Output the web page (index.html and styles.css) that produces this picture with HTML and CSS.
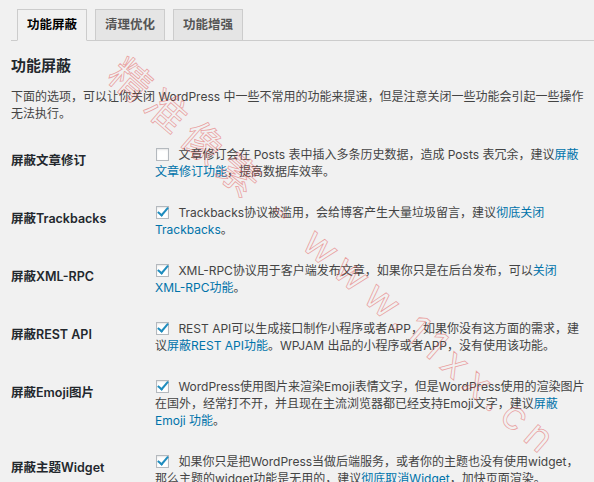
FILE: index.html
```html
<!DOCTYPE html>
<html>

<head>
    <meta name="viewport" content="width=device-width, initial-scale=1" />
    <link rel="stylesheet" href="styles.css">
</head>

<body>
    <div class="wrap">
        <nav class="nav-tabs">
            <a class="nav-tab active" href="#">功能屏蔽</a>
            <a class="nav-tab" href="#">清理优化</a>
            <a class="nav-tab" href="#">功能增强</a>
        </nav>

        <h2 class="title">功能屏蔽</h2>
        <p class="desc">下面的选项，可以让你关闭 WordPress 中一些不常用的功能来提速，但是注意关闭一些功能会引起一些操作无法执行。</p>

        <div class="form-table">
            <div class="row">
                <div class="th">屏蔽文章修订</div>
                <div class="td"><label><input type="checkbox"> 文章修订会在 Posts 表中插入多条历史数据，造成 Posts 表冗余，建议<a href="#">屏蔽文章修订功能</a>，提高数据库效率。</label></div>
            </div>
            <div class="row">
                <div class="th">屏蔽Trackbacks</div>
                <div class="td"><label><input type="checkbox" checked> Trackbacks协议被滥用，会给博客产生大量垃圾留言，建议<a href="#">彻底关闭Trackbacks</a>。</label></div>
            </div>
            <div class="row">
                <div class="th">屏蔽XML-RPC</div>
                <div class="td"><label><input type="checkbox" checked> XML-RPC协议用于客户端发布文章，如果你只是在后台发布，可以<a href="#">关闭<span class="nw">XML-RPC</span>功能</a>。</label></div>
            </div>
            <div class="row">
                <div class="th">屏蔽REST API</div>
                <div class="td"><label><input type="checkbox" checked> REST API可以生成接口制作小程序或者APP，如果你没有这方面的需求，建议<a href="#">屏蔽REST API功能</a>。WPJAM 出品的小程序或者APP，没有使用该功能。</label></div>
            </div>
            <div class="row">
                <div class="th">屏蔽Emoji图片</div>
                <div class="td"><label><input type="checkbox" checked> WordPress使用图片来渲染Emoji表情文字，但是WordPress使用的渲染图片在国外，经常打不开，并且现在主流浏览器都已经支持Emoji文字，建议<a href="#">屏蔽Emoji 功能</a>。</label></div>
            </div>
            <div class="row">
                <div class="th">屏蔽主题Widget</div>
                <div class="td"><label><input type="checkbox" checked> 如果你只是把WordPress当做后端服务，或者你的主题也没有使用widget，那么主题的widget功能是无用的，建议<a href="#">彻底取消Widget</a>，加快页面渲染。</label></div>
            </div>
        </div>
    </div>

    <!-- watermark over the screenshot -->
    <div class="watermark">精准像素 - www.11xx.cn</div>
</body>

</html>
```

FILE: styles.css
```css
body {
    margin: 0;
    background-color: #f1f1f1;
    font-family: Inter, "Noto Sans CJK SC", sans-serif;
    font-size: 12px;
    line-height: 17px;
    color: #444;
    width: 100vw;
    height: 100vh;
    overflow: hidden;
    position: relative;
}

a {
    color: #0073aa;
    text-decoration: none;
}

.nw {
    white-space: nowrap;
}

.wrap {
    margin-left: 11px;
}

.nav-tabs {
    display: flex;
    gap: 8px;
    padding: 9px 0 0 6px;
    border-bottom: 1px solid #ccc;
}

.nav-tab {
    display: block;
    padding: 5px 9px;
    line-height: 20px;
    font-size: 12.5px;
    font-weight: 600;
    color: #555;
    background-color: #e5e5e5;
    border: 1px solid #ccc;
    margin-bottom: -1px;
}

.nav-tab.active {
    color: #000;
    background-color: #f1f1f1;
    border-bottom-color: #f1f1f1;
}

.title {
    margin: 15px 11px 0 0;
    font-size: 15px;
    line-height: 20px;
    font-weight: 600;
    color: #23282d;
}

.desc {
    margin: 12px 4px 12px 0;
}

.form-table {
    margin-right: 7px;
}

.row {
    display: grid;
    grid-template-columns: 144px 1fr;
}

.th {
    padding-top: 18px;
    font-size: 12.5px;
    font-weight: 600;
    color: #23282d;
}

.td {
    padding: 12px 0;
}

input[type=checkbox] {
    -webkit-appearance: none;
    appearance: none;
    position: relative;
    width: 13px;
    height: 13px;
    margin: -2px 6px 0 1px;
    vertical-align: middle;
    background-color: #fff;
    border: 1px solid #b4b9be;
    box-shadow: inset 0 1px 2px rgba(0, 0, 0, .1);
    box-sizing: border-box;
}

input[type=checkbox]:checked::before {
    content: "";
    position: absolute;
    left: 3px;
    top: -2px;
    width: 4px;
    height: 9px;
    border-right: 2.5px solid #1e8cbe;
    border-bottom: 2.5px solid #1e8cbe;
    transform: rotate(40deg);
}

.watermark {
    position: absolute;
    left: 128px;
    top: 52px;
    transform-origin: 0 0;
    transform: rotate(41deg);
    font-size: 40px;
    line-height: 40px;
    letter-spacing: 8px;
    white-space: nowrap;
    color: transparent;
    -webkit-text-stroke: 0.8px rgba(225, 80, 80, .5);
    pointer-events: none;
}
```
